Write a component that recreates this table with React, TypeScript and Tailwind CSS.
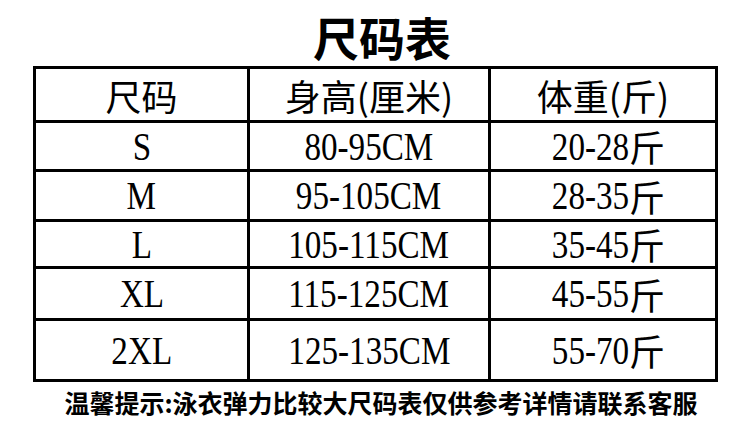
import React from "react";

const cjk = { fontFamily: '"Noto Sans CJK SC", "Noto Sans", sans-serif' };

type Row = { size: string; height: string; weight: string; h: string };

const rows: Row[] = [
  { size: "S", height: "80-95CM", weight: "20-28", h: "h-[49px]" },
  { size: "M", height: "95-105CM", weight: "28-35", h: "h-[50px]" },
  { size: "L", height: "105-115CM", weight: "35-45", h: "h-[47px]" },
  { size: "XL", height: "115-125CM", weight: "45-55", h: "h-[52px]" },
  { size: "2XL", height: "125-135CM", weight: "55-70", h: "h-[58px]" },
];

function Num({ children }: { children: React.ReactNode }) {
  return (
    <span className="inline-block scale-x-[0.85] font-['Liberation_Serif',serif] text-[39px] leading-none text-black">
      {children}
    </span>
  );
}

export default function App() {
  return (
    <div className="w-[750px] h-[440px] bg-white overflow-hidden text-black">
      <div className="h-[66px] pt-[13px] pl-[14px] flex justify-center">
        <div className="text-[46px] leading-none font-bold" style={cjk}>
          尺码表
        </div>
      </div>
      <div className="ml-[33px] w-[685px] border-[3px] border-black flex flex-col">
        <div className="flex h-[54px] border-b-[3px] border-black">
          <div className="w-[214px] border-r-[3px] border-black flex items-center justify-center text-[36px] leading-none" style={cjk}>
            尺码
          </div>
          <div className="w-[241px] border-r-[3px] border-black flex items-center justify-center text-[36px] leading-none" style={cjk}>
            身高(厘米)
          </div>
          <div className="flex-1 flex items-center justify-center text-[36px] leading-none" style={cjk}>
            体重(斤)
          </div>
        </div>
        {rows.map((r, i) => (
          <div
            key={r.size}
            className={`flex ${r.h} ${i < rows.length - 1 ? "border-b-[3px] border-black" : ""}`}
          >
            <div className="w-[214px] border-r-[3px] border-black flex items-center justify-center">
              <Num>{r.size}</Num>
            </div>
            <div className="w-[241px] border-r-[3px] border-black flex items-center justify-center">
              <Num>{r.height}</Num>
            </div>
            <div className="flex-1 flex items-center justify-center pl-[4px]">
              <Num>{r.weight}</Num>
              <span className="text-[36px] leading-none -ml-[7px]" style={cjk}>
                斤
              </span>
            </div>
          </div>
        ))}
      </div>
      <div className="pt-[8px] pl-[12px] flex justify-center">
        <div className="text-[25px] leading-none font-bold whitespace-nowrap" style={cjk}>
          温馨提示:泳衣弹力比较大尺码表仅供参考详情请联系客服
        </div>
      </div>
    </div>
  );
}
